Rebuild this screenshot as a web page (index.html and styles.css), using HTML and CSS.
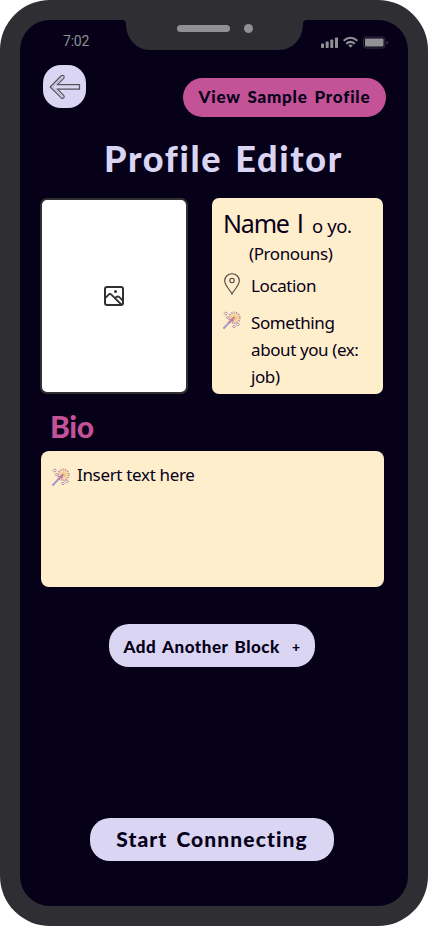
FILE: index.html
```html
<!DOCTYPE html>
<html lang="en">
<head>
<meta charset="utf-8">
<title>Profile Editor</title>
<link rel="stylesheet" href="styles.css">
</head>
<body>
<svg class="defs" width="0" height="0" aria-hidden="true">
  <symbol id="wand" viewBox="0 0 18 18">
    <path d="M1 17 9 8.400" stroke="#a39bcb" stroke-width="2" stroke-linecap="round"/>
    <circle cx="11.400" cy="6.800" r="5.400" fill="#f8d9a8" stroke="#b58fa8" stroke-width="1.800" stroke-dasharray="1.200 1.200"/>
    <path d="m11.800 3.200.9 2.400 2.500.2-2 1.600.5 2.400-2.100-1.200-3 2 .9-3.300-1.600-1.600 2.500-.2z" fill="#f3c27f"/>
    <path d="M6 11.800 11.200 6.400M7.500 8l3 2" stroke="#b978a6" stroke-width="1.900" fill="none"/>
    <g fill="#ffeecb" stroke="#ab8dae" stroke-width="1">
      <path d="M2.700.8 4.400 2.500 2.700 4.200 1 2.500zM4.300 5.300l1.300 1.300-1.300 1.300L3 6.600zM14.800 11.600l1.700 1.700-1.700 1.700-1.700-1.700zM10.900 14l1.500 1.500-1.500 1.500-1.500-1.500z"/>
    </g>
  </symbol>
</svg>
<div class="phone">
  <main class="screen">
    <div class="status">
      <span class="time">7:02</span>
      <svg class="notch" width="185" height="30" viewBox="0 0 185 30">
        <path d="M0 0h185q-4 0-4 4c0 15-11 26-24 26H28C15 30 4 19 4 4q0-4-4-4z" fill="#2f2e33"/>
        <rect x="55" y="5" width="53" height="7" rx="3.500" fill="#919095"/>
        <circle cx="126.500" cy="8.500" r="4.500" fill="#919095"/>
      </svg>
      <svg class="signals" width="68" height="14" viewBox="0 0 68 14">
        <g fill="#919095">
          <rect x="0" y="7.500" width="3" height="4.500" rx=".7"/><rect x="4.700" y="5.500" width="3" height="6.500" rx=".7"/><rect x="9.300" y="3.500" width="3" height="8.500" rx=".7"/><rect x="14" y="1.500" width="3" height="10.500" rx=".7"/>
          <path d="M29.500 11.800 27.200 9.300q2.300-1.800 4.600 0z"/>
          <rect x="44" y="2.500" width="18.500" height="8" rx="1"/>
          <path d="M65.700 5v3.500q1.300-.6 1.300-1.750T65.700 5z" opacity=".5"/>
        </g>
        <path d="M22.600 4.800q6.900-6 13.800 0M25.200 7.700q4.300-3.600 8.600 0" fill="none" stroke="#919095" stroke-width="2"/>
        <rect x="42.500" y="1" width="21.500" height="11" rx="2.500" fill="none" stroke="#34313f"/>
      </svg>
    </div>
    <header class="top">
      <button class="back" aria-label="Back">
        <svg width="32" height="26" viewBox="0 0 32 26"><path d="M1.200 13 12.300 1.800q1.300-1 2.400.1t0 2.400L8.500 10.600H30.500v4.600H8.500l6.200 6.200q1.100 1.300 0 2.400t-2.400.1z" fill="#dad5f2" stroke="#55535c" stroke-width="1.200"/><path d="m3.800 13 9.500-9.500M3.800 13l9.500 9.500" stroke="#a5a1b2" stroke-width=".8" fill="none"/></svg>
      </button>
      <button class="pill sample"><span>View Sample Profile</span></button>
    </header>
    <h1><span>Profile Editor</span></h1>
    <section class="cards">
      <div class="photo">
        <svg width="20" height="20" viewBox="0 0 20 20" fill="none" stroke="#303033" stroke-width="2"><rect x="1" y="1" width="18" height="18" rx="2"/><path d="M1 12.500 4.600 8.700q1.400-1.300 2.800 0L17.800 19M11 12.300l1.400-1.300q1.500-1.100 3 .1L19 14.800" stroke-width="1.800"/><circle cx="11.500" cy="5.500" r="1.500" fill="#303033" stroke="none"/></svg>
      </div>
      <div class="info">
        <p class="name"><span class="big">Name</span><span class="bar">l</span><span class="age">o yo.</span></p>
        <p class="pronouns">(Pronouns)</p>
        <p class="row place"><svg width="16" height="22" viewBox="0 0 16 22" fill="none" stroke="#4b4540" stroke-width="1.100"><path d="M8 21C6.500 17.500.7 12.500.7 7.700a7.300 7 0 0 1 14.600 0C15.300 12.500 9.500 17.500 8 21z"/><circle cx="8" cy="7.500" r="2.200"/></svg><span>Location</span></p>
        <p class="row about"><svg width="18" height="18"><use href="#wand"/></svg><span>Something<br>about you (ex:<br>job)</span></p>
      </div>
    </section>
    <h2><span>Bio</span></h2>
    <section class="bio">
      <svg width="18" height="18"><use href="#wand"/></svg><span>Insert text here</span>
    </section>
    <button class="pill add"><span>Add Another Block</span><span class="plus">+</span></button>
    <button class="pill start"><span>Start Connnecting</span></button>
  </main>
</div>
</body>
</html>
```

FILE: styles.css
```css
* { box-sizing: border-box; margin: 0; padding: 0; }
body { background: #fff; width: 428px; height: 926px; overflow: hidden; }
.defs { display: block; height: 0; }
svg { display: block; flex: none; }
.phone { width: 428px; height: 926px; padding: 20px; border-radius: 50px; background: #2f2e33; }
.screen { display: flex; flex-direction: column; width: 388px; height: 886px; border-radius: 30px; background: #060019; overflow: hidden; color: #060019; font-family: "Noto Sans", sans-serif; font-size: 17px; letter-spacing: -.4px; white-space: nowrap; }
button { border: 0; color: #060019; display: flex; align-items: center; justify-content: center; white-space: nowrap; }
.pill, h1, h2 { font-family: Lato, sans-serif; font-weight: 900; font-variant-ligatures: none; }
.status { display: flex; height: 30px; }
.time { width: 102px; padding-left: 43px; font: 14px/43px Roboto, sans-serif; letter-spacing: -.2px; color: #919095; }
.signals { margin: 16px 0 0 14px; }
.top { display: flex; justify-content: space-between; align-items: flex-start; height: 52px; margin: 15px 22px 0 23px; }
.back { width: 43px; height: 43px; border-radius: 18px; background: #dad5f2; }
.sample { width: 203px; height: 39px; margin-top: 13px; padding-bottom: 2px; border-radius: 20px; background: #c35296; font-size: 17px; letter-spacing: .8px; word-spacing: 2px; }
h1 { margin: 19px 0 0 84px; font-size: 36px; line-height: 44px; letter-spacing: 1.65px; word-spacing: 3px; color: #dad5f2; }
.cards { display: flex; justify-content: space-between; margin: 18px 25px 0 20px; height: 196px; }
.photo { width: 148px; border: 2px solid #303033; border-radius: 7px; background: #fff; display: flex; align-items: center; justify-content: center; }
.info { width: 171px; border-radius: 7px; background: #ffeecb; padding: 6px 0 0 12px; }
.name { display: flex; align-items: baseline; height: 36px; line-height: 38px; }
.big { font-size: 25px; width: 74px; letter-spacing: -1.2px; margin-left: -1px; }
.bar { font-size: 26px; width: 15px; }
.age { font-size: 18.5px; }
.pronouns { padding-left: 25px; line-height: 27px; }
.row { display: flex; line-height: 27px; }
.place { height: 37px; padding-top: 5px; gap: 11px; }
.place svg { margin-top: 1px; }
.about { gap: 10px; padding-top: 5px; margin-left: -1px; }
.about svg { margin-top: 2px; }
h2 { margin: 12px 0 0 30px; font-size: 30px; line-height: 40px; letter-spacing: -.3px; color: #c35296; }
.bio { display: flex; gap: 7px; margin: 5px 24px 0 21px; height: 136px; padding: 10px 11px; border-radius: 8px; background: #ffeecb; line-height: 27px; letter-spacing: -.33px; }
.bio svg { margin-top: 7px; }
.add { width: 206px; height: 43px; margin: 37px 0 0 89px; padding-top: 2px; border-radius: 20px; background: #dad5f2; font-size: 17px; gap: 12px; letter-spacing: .5px; word-spacing: 2px; }
.plus { font-size: 14px; }
.start { width: 244px; height: 43px; margin: 151px 0 0 70px; padding-bottom: 2px; border-radius: 20px; background: #dad5f2; font-size: 21px; letter-spacing: 1.1px; word-spacing: 3px; }
```
